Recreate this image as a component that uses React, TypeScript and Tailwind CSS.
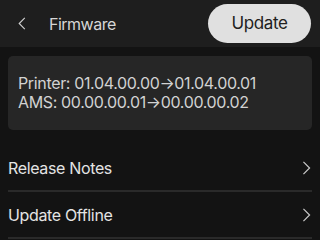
function Chevron({ dir, className }: { dir: 'left' | 'right'; className?: string }) {
  return (
    <svg viewBox="0 0 10 16" className={className} fill="none" stroke="currentColor" strokeWidth={1.4}>
      {dir === 'left' ? <path d="M8.5 1 L1.5 8 L8.5 15" /> : <path d="M1.5 1 L8.5 8 L1.5 15" />}
    </svg>
  )
}

function MenuRow({ label }: { label: string }) {
  return (
    <div className="flex items-center h-[47px] border-b-2 border-[#2a2a2a] pr-[1px]">
      <span className="flex-1 text-[16px] tracking-[-0.35px] text-[#e4e4e4]">{label}</span>
      <Chevron dir="right" className="w-[9px] h-[14px] text-[#c8c8c8]" />
    </div>
  )
}

export default function App() {
  return (
    <div className="w-[320px] h-[240px] overflow-hidden bg-[#131313] font-['Inter',sans-serif]">
      {/* Header */}
      <div className="flex items-center h-[47px] bg-[#1e1e1e] pl-[18px] pr-[9px]">
        <Chevron dir="left" className="w-[8px] h-[13px] text-[#d0d0d0]" />
        <span className="flex-1 ml-[23px] text-[16px] tracking-[-0.5px] text-[#d6d6d6]">Firmware</span>
        <button className="w-[103px] h-[39px] rounded-full bg-[#e0e0e0] text-[17px] tracking-[-0.4px] text-[#202020]">
          Update
        </button>
      </div>

      <div className="px-[8px] pt-[9px]">
        {/* Version card */}
        <div className="rounded-[5px] bg-[#262626] h-[74px] px-[10px] flex flex-col justify-center text-[16px] leading-[19px] tracking-[-0.35px] text-[#d2d2d2]">
          <div>Printer: 01.04.00.00→01.04.00.01</div>
          <div>AMS: 00.00.00.01→00.00.00.02</div>
        </div>

        {/* Menu */}
        <div className="mt-[15px]">
          <MenuRow label="Release Notes" />
          <MenuRow label="Update Offline" />
        </div>
      </div>
    </div>
  )
}
